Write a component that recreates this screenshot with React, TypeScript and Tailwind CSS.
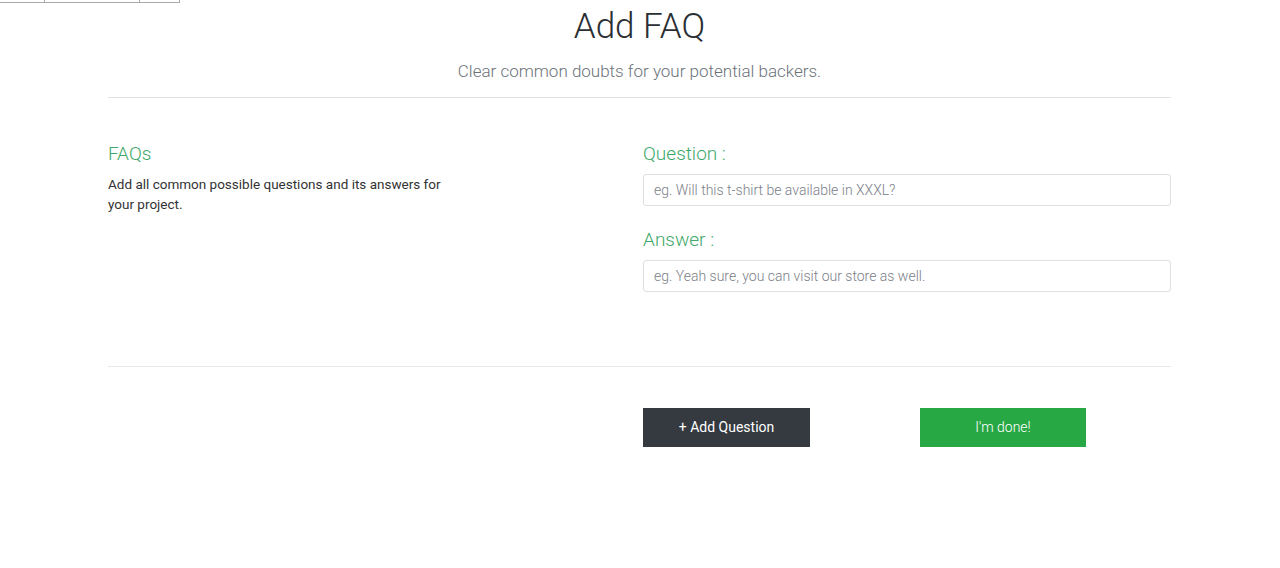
import React from 'react';

const font = { fontFamily: 'Roboto, "Open Sans", sans-serif' };

const FormField: React.FC<{ label: string; placeholder: string }> = ({ label, placeholder }) => (
  <div className="flex flex-col">
    <label className="text-[19px] font-light text-[#3ea86a] leading-[26px] mb-[7px]">{label}</label>
    <input
      type="text"
      placeholder={placeholder}
      className="h-[32px] w-full rounded-[3px] border border-[#dcdfe4] bg-white px-[10px] text-[14px] font-light text-[#495057] placeholder:text-[#7b8088] outline-none"
    />
  </div>
);

export default function App() {
  return (
    <div className="min-h-[568px] bg-white text-[#212529]" style={font}>
      <div className="flex h-[3px] w-[180px]">
        <div className="w-[45px] border-b border-r border-[#a9a9a9]" />
        <div className="w-[95px] border-b border-r border-[#a9a9a9]" />
        <div className="w-[40px] border-b border-r border-[#a9a9a9]" />
      </div>

      <div className="ml-[108px] w-[1063px]">
        <header className="flex flex-col items-center">
          <h1 className="mt-[2px] text-[35px] font-light leading-[44px] text-[#2b2f33]">Add FAQ</h1>
          <p className="mt-[10px] text-[17px] font-light text-[#6c737a]">Clear common doubts for your potential backers.</p>
        </header>
        <hr className="mt-[12px] border-t border-[#e2e2e2]" />

        <section className="mt-[43px] grid grid-cols-2 gap-x-[7px]">
          <div>
            <h3 className="text-[19px] font-light leading-[26px] text-[#3ea86a]">FAQs</h3>
            <p className="mt-[7px] max-w-[345px] text-[13.5px] leading-[20px] text-[#333]">
              Add all common possible questions and its answers for your project.
            </p>
          </div>
          <div className="flex flex-col gap-[21px]">
            <FormField label="Question :" placeholder="eg. Will this t-shirt be available in XXXL?" />
            <FormField label="Answer :" placeholder="eg. Yeah sure, you can visit our store as well." />
          </div>
        </section>

        <hr className="mt-[74px] border-t border-[#e8e8e8]" />

        <div className="mt-[41px] grid grid-cols-2 gap-x-[7px]">
          <div />
          <div className="flex gap-[110px]">
            <button className="h-[39px] w-[167px] bg-[#343a40] text-[14px] font-normal text-white">+ Add Question</button>
            <button className="h-[39px] w-[166px] bg-[#28a745] text-[14px] font-light text-white">I'm done!</button>
          </div>
        </div>
      </div>
    </div>
  );
}
